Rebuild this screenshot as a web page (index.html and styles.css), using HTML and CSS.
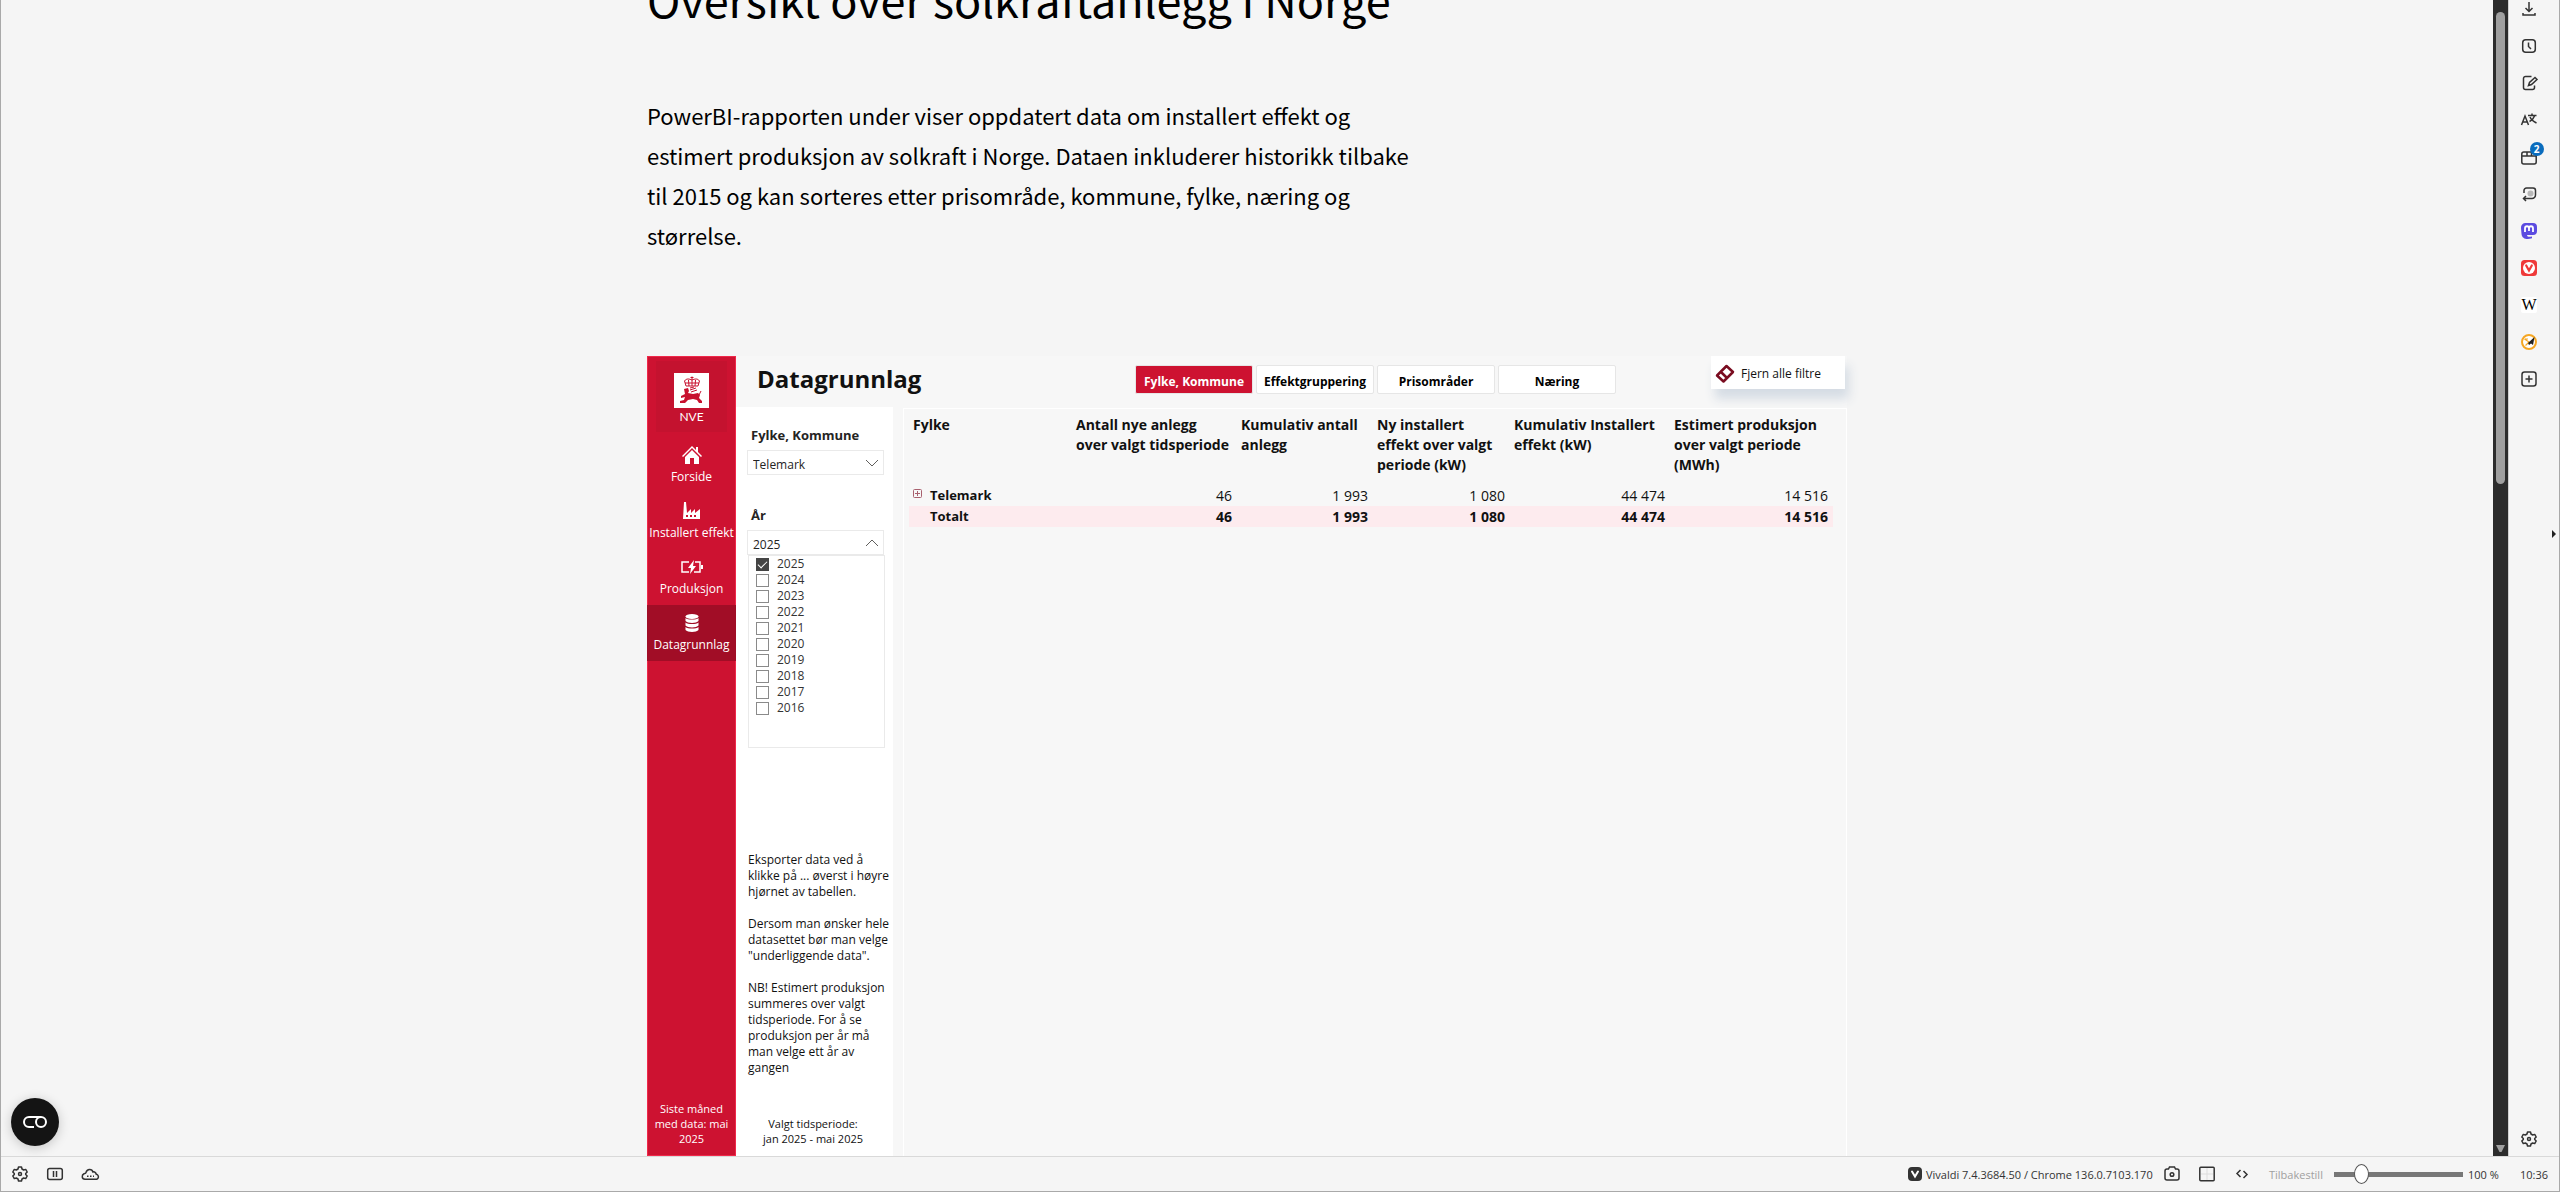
FILE: index.html
```html
<!DOCTYPE html>
<html lang="no">
<head>
<meta charset="utf-8">
<title>Oversikt over solkraftanlegg i Norge</title>
<link rel="stylesheet" href="styles.css">
</head>
<body>
<div class="window">
  <div class="workspace">
    <main class="page">
      <article class="content">
        <h1 class="title">Oversikt over solkraftanlegg i Norge</h1>
        <p class="lead">PowerBI-rapporten under viser oppdatert data om installert effekt og estimert produksjon av solkraft i Norge. Dataen inkluderer historikk tilbake til 2015 og kan sorteres etter prisområde, kommune, fylke, næring og størrelse.</p>
        <section class="report">
          <nav class="rail">
            <div class="logo">
              <svg width="35" height="35" viewBox="0 0 35 35"><path fill="#fff" d="M0 0h35v35H0z"/><g fill="none" stroke="#c8102e" stroke-width="1"><path d="M12 13l-1.500-5c2-3 5-2 7.500-1 2.500-1 5.500-2 7.500 1L24 13zM18 3.500V13M14.500 7l.5 6M21.500 7l-.5 6M16.500 4.500h3M11 10h14"/></g><path fill="#c8102e" d="M10 16l4-1 1 3-1 2 5 1 5-1 2 2-1 3 3 3v2h-3l-2-3-4-1-5 1-3 3H6v-2l4-1 1-3-4 1v-2l4-2z"/><path stroke="#c8102e" fill="none" d="M16 17l6-2M17 19l6-2M25 22l2-4M16 15l4-1"/></svg>
              <span>NVE</span>
            </div>
            <a class="rail-item" href="#"><svg width="20" height="20" viewBox="0 0 20 20" fill="#fff"><path d="M10 1L0 11l1 1 9-9 9 9 1-1-4-4V2h-2v3z"/><path d="M3 12l7-7 7 7v7h-5v-6H8v6H3z"/></svg>Forside</a>
            <a class="rail-item" href="#"><svg width="20" height="20" viewBox="0 0 20 20" fill="#fff"><path fill-rule="evenodd" d="M2 1h2l1 11 4-4v4l4-4v4l5-4v10H1zM4 14v2h2v-2zm4 0v2h2v-2zm4 0v2h2v-2z"/></svg>Installert effekt</a>
            <a class="rail-item" href="#"><svg width="22" height="20" viewBox="0 0 22 20"><path fill="none" stroke="#fff" stroke-width="1.500" d="M8 5H1v10h7M14 5h5v10h-6"/><path fill="#fff" d="M13 3l-6 8h3l-1 6 6-8h-3zM20 8h2v4h-2z"/></svg>Produksjon</a>
            <a class="rail-item rail-item-active" href="#"><svg width="20" height="20" viewBox="0 0 20 20" fill="#fff"><ellipse cx="10" cy="3.500" rx="6.500" ry="2.500"/><path d="M3.500 5c2 2 11 2 13 0v3c-2 2.500-11 2.500-13 0zM3.500 9.500c2 2 11 2 13 0v3c-2 2.500-11 2.500-13 0zM3.500 14c2 2 11 2 13 0v3c-2 2.500-11 2.500-13 0z"/></svg>Datagrunnlag</a>
            <p class="rail-note">Siste måned<br>med data: mai<br>2025</p>
          </nav>
          <div class="report-main">
            <header class="report-head">
              <h2 class="report-title">Datagrunnlag</h2>
              <div class="tabs">
                <button class="tab tab-active" type="button">Fylke, Kommune</button>
                <button class="tab" type="button">Effektgruppering</button>
                <button class="tab" type="button">Prisområder</button>
                <button class="tab" type="button">Næring</button>
              </div>
              <button class="clear" type="button"><svg width="20" height="20" viewBox="0 0 20 20" fill="none" stroke="#7a0c20" stroke-width="2.500" stroke-linejoin="round"><path d="M2 11.500L11.500 2 18 8 8.500 17.500zM6 8l6 6"/></svg>Fjern alle filtre</button>
            </header>
            <div class="report-body">
              <aside class="filters">
                <label class="filter-label" for="fylke">Fylke, Kommune</label>
                <div class="picker">
                  <select id="fylke" class="picker-select"><option>Telemark</option></select>
                  <svg class="picker-arrow" width="14" height="8" viewBox="0 0 14 8"><path d="M1 1l6 6 6-6"/></svg>
                </div>
                <label class="filter-label" for="aar">År</label>
                <div class="picker">
                  <select id="aar" class="picker-select"><option>2025</option></select>
                  <svg class="picker-arrow" width="14" height="8" viewBox="0 0 14 8"><path d="M1 7l6-6 6 6"/></svg>
                </div>
                <div class="years">
                  <label class="year"><input type="checkbox" checked>2025</label>
                  <label class="year"><input type="checkbox">2024</label>
                  <label class="year"><input type="checkbox">2023</label>
                  <label class="year"><input type="checkbox">2022</label>
                  <label class="year"><input type="checkbox">2021</label>
                  <label class="year"><input type="checkbox">2020</label>
                  <label class="year"><input type="checkbox">2019</label>
                  <label class="year"><input type="checkbox">2018</label>
                  <label class="year"><input type="checkbox">2017</label>
                  <label class="year"><input type="checkbox">2016</label>
                </div>
                <div class="help">
                  <p>Eksporter data ved å<br>klikke på ... øverst i høyre<br>hjørnet av tabellen.</p>
                  <p>Dersom man ønsker hele<br>datasettet bør man velge<br>"underliggende data".</p>
                  <p>NB! Estimert produksjon<br>summeres over valgt<br>tidsperiode. For å se<br>produksjon per år må<br>man velge ett år av<br>gangen</p>
                </div>
                <p class="period">Valgt tidsperiode:<br>jan 2025 - mai 2025</p>
              </aside>
              <div class="matrix">
                <table class="data">
                  <colgroup><col class="c-name"><col class="c-new"><col class="c-count"><col class="c-power"><col class="c-total"><col class="c-prod"></colgroup>
                  <thead>
                    <tr><th>Fylke</th><th>Antall nye anlegg<br>over valgt tidsperiode</th><th>Kumulativ antall<br>anlegg</th><th>Ny installert<br>effekt over valgt<br>periode (kW)</th><th>Kumulativ Installert<br>effekt (kW)</th><th>Estimert produksjon<br>over valgt periode<br>(MWh)</th></tr>
                  </thead>
                  <tbody>
                    <tr><th><span class="row-name"><button class="expand" type="button" aria-label="Utvid"><svg width="9" height="9" viewBox="0 0 9 9" fill="none" stroke="#a8606e"><rect x=".5" y=".5" width="8" height="8" rx="1"/><path d="M2 4.500h5M4.500 2v5"/></svg></button>Telemark</span></th><td>46</td><td>1 993</td><td>1 080</td><td>44 474</td><td>14 516</td></tr>
                    <tr class="total"><th><span class="row-name">Totalt</span></th><td>46</td><td>1 993</td><td>1 080</td><td>44 474</td><td>14 516</td></tr>
                  </tbody>
                </table>
              </div>
            </div>
          </div>
        </section>
      </article>
      <button class="consent" type="button" aria-label="Informasjonskapsler"><svg width="24" height="12" viewBox="0 0 24 12" fill="none" stroke="#fff" stroke-width="2"><path d="M11 11H6A5 5 0 0 1 6 1h12"/><circle cx="18" cy="6" r="5"/></svg></button>
    </main>
    <div class="scrollbar"><div class="thumb"></div><svg width="9" height="8" viewBox="0 0 9 8"><path fill="#9f9f9f" d="M0 1h9L5.500 8h-2z"/></svg></div>
    <aside class="panel">
      <button class="tool" type="button" aria-label="Nedlastinger"><svg class="ico" viewBox="0 0 16 16"><path d="M8 1v9M4.500 7L8 10.500 11.500 7M2 12v2h12v-2"/></svg></button>
      <button class="tool" type="button" aria-label="Historikk"><svg class="ico" viewBox="0 0 16 16"><rect x="1.700" y="1.700" width="12.600" height="12.600" rx="3"/><path d="M7.500 4.500v4l2.500 2.500"/></svg></button>
      <button class="tool" type="button" aria-label="Notater"><svg class="ico" viewBox="0 0 16 16"><path d="M10.500 1.500H4.500a2 2 0 0 0-2 2v9a2 2 0 0 0 2 2h7a2 2 0 0 0 2-2V10.500M7.500 10.500l1-3 5.500-5L16 4.500 10.500 9.500z"/></svg></button>
      <button class="tool" type="button" aria-label="Oversett"><svg class="ico" viewBox="0 0 16 16"><path d="M.5 13L4 4l3.500 9M1.500 10h5M7 3.500h8.500M11 1.500v2M13.500 4c-1 3-3 4.500-5 5.500M9 5c1 2.500 3.500 4.500 6.500 6"/></svg></button>
      <button class="tool" type="button" aria-label="Faner"><svg class="ico" viewBox="0 0 16 16"><rect x=".8" y="3" width="14.400" height="12" rx="2"/><path d="M1 7h14M6 3v4M10.500 3v4"/></svg><span class="badge">2</span></button>
      <button class="tool" type="button" aria-label="Økter"><svg class="ico" viewBox="0 0 16 16"><path d="M3 7V4.500a2.500 2.500 0 0 1 2.500-2.500h6.500a2.500 2.500 0 0 1 2.500 2.500V9A3.500 3.500 0 0 1 11 12.500H2.500M5 10l-2.500 2.500L5 15"/><circle cx="9.500" cy="7.500" r="3" fill="#b8b8b8" stroke="none"/></svg></button>
      <button class="tool" type="button" aria-label="Mastodon"><svg class="ico" viewBox="0 0 16 16" stroke="none"><path fill="#5b4be0" d="M4 0h8a4 4 0 0 1 4 4v4a4 4 0 0 1-4 4H6c0 2 2.500 2 5 1.500v1.800C6 17 1 16 .5 11L0 5a5 5 0 0 1 4-5z"/><path fill="none" stroke="#fff" stroke-width="1.800" d="M4 9V5.500C4 2.500 8 2.500 8 5.500V8M8 5.500c0-3 4-3 4 0V9"/></svg></button>
      <button class="tool" type="button" aria-label="Vivaldi"><svg class="ico" viewBox="0 0 16 16" stroke="none"><rect width="16" height="16" rx="3.500" fill="#ef3939"/><circle cx="8" cy="8" r="6" fill="#fff"/><path fill="none" stroke="#ef3939" stroke-width="2.200" stroke-linecap="round" d="M5.200 5.500L8 10.500l2.800-5"/></svg></button>
      <button class="tool" type="button" aria-label="Wikipedia"><span class="wiki">W</span></button>
      <button class="tool" type="button" aria-label="Nettpanel"><svg class="ico" viewBox="0 0 16 16"><circle cx="8" cy="8" r="7" fill="#fff" stroke="#f5a623" stroke-width="2"/><path stroke-width="1.200" d="M3.500 5l4.500 3-3.500 3.500M4 5h3" stroke="#f5a623"/><path fill="#222" stroke="none" d="M13.500 3l-1.500 8-2-1.500-2 1.500-1-2z"/></svg></button>
      <button class="tool" type="button" aria-label="Legg til"><svg class="ico" viewBox="0 0 16 16"><rect x="1" y="1" width="14" height="14" rx="2.500"/><path d="M8 4.500v7M4.500 8h7"/></svg></button>
      <button class="tool tool-end" type="button" aria-label="Innstillinger"><svg class="ico" viewBox="0 0 16 16"><path stroke-linejoin="round" d="M6.500 1h3l.5 2 1.700 1 2-.6 1.500 2.600L13.700 7.500v1l1.500 1.500-1.500 2.600-2-.6L10 13l-.5 2h-3L6 13l-1.700-1-2 .6L.8 10l1.500-1.500v-1L.8 6l1.500-2.600 2 .6L6 3z"/><circle cx="8" cy="8" r="1.500"/></svg></button>
      <button class="toggle" type="button" aria-label="Vis panel"></button>
    </aside>
  </div>
  <footer class="status">
    <button class="stool" type="button" aria-label="Innstillinger"><svg class="ico" viewBox="0 0 16 16"><path stroke-linejoin="round" d="M6.500 1h3l.5 2 1.700 1 2-.6 1.500 2.600L13.700 7.500v1l1.500 1.500-1.500 2.600-2-.6L10 13l-.5 2h-3L6 13l-1.700-1-2 .6L.8 10l1.500-1.500v-1L.8 6l1.500-2.600 2 .6L6 3z"/><circle cx="8" cy="8" r="1.500"/></svg></button>
    <button class="stool" type="button" aria-label="Pause"><svg class="ico" viewBox="0 0 16 16"><rect x=".7" y="2.500" width="14.600" height="11" rx="2"/><path d="M6.500 5v6M9.500 5v6"/></svg></button>
    <button class="stool" type="button" aria-label="Synkronisering"><svg class="ico" viewBox="0 0 16 16"><path d="M3 13.300h10.500a2.500 2.500 0 0 0 .8-5C14 6.500 12.500 5.500 11 6 10 2.500 5 2.500 4 6.500c0 .5-1 1-2 1.300C-.5 9-.5 13 3 13.300z"/><path stroke-dasharray="1.500 1.500" d="M5 10.300h7"/></svg></button>
    <span class="version"><svg class="version-logo" width="14" height="16" viewBox="0 0 14 16"><rect y="1" width="14" height="14" rx="4" fill="#333"/><path fill="none" stroke="#fff" stroke-width="2" stroke-linecap="round" d="M4 5.500l3 5 3-5"/></svg><span>Vivaldi 7.4.3684.50 / Chrome 136.0.7103.170</span></span>
    <button class="stool" type="button" aria-label="Skjermbilde"><svg class="ico" viewBox="0 0 16 16"><path d="M1 5a2 2 0 0 1 2-2h1.500l1-2h5l1 2H13a2 2 0 0 1 2 2v7a2 2 0 0 1-2 2H3a2 2 0 0 1-2-2z"/><circle cx="8" cy="8.500" r="1.800"/></svg></button>
    <button class="stool" type="button" aria-label="Fliser"><svg class="ico" viewBox="0 0 16 16"><rect x=".8" y="1.300" width="14.400" height="13.400" rx="1"/><path stroke="#ddd" stroke-width="1" d="M8 2v12M2 8h12"/></svg></button>
    <button class="stool" type="button" aria-label="Sidehandlinger"><svg class="ico" viewBox="0 0 16 16"><path d="M6.500 4L3 7.500 6.500 11M9.500 5l3.500 3.500L9.500 12"/></svg></button>
    <button class="reset" type="button" disabled>Tilbakestill</button>
    <input class="zoom" type="range" min="20" max="500" value="103" aria-label="Sidezoom">
    <span class="percent">100 %</span>
    <span class="clock">10:36</span>
  </footer>
</div>
</body>
</html>
```

FILE: styles.css
```css
* { box-sizing: border-box; }
body { margin: 0; font-family: "Open Sans", "Noto Sans", sans-serif; font-size: 12px; color: #111; }
h1, h2, p { margin: 0; }
button, select, input { font: inherit; color: inherit; margin: 0; }
button { border: 0; padding: 0; background: none; }

.window { height: 100vh; display: flex; flex-direction: column; background: #f5f5f5; border: 1px solid #a9a9a9; border-top: 0; }
.workspace { flex: 1; min-height: 0; display: flex; }
.page { flex: 1; min-width: 0; overflow: hidden; display: flex; flex-direction: column; }
.content { flex: 1; width: 100%; max-width: 1200px; margin: -35px auto 0; display: flex; flex-direction: column; font-family: "Noto Sans CJK SC", sans-serif; color: #000; }
.title { font-size: 45px; line-height: 68px; font-weight: 400; }
.lead { max-width: 780px; margin: 62px 0 101px; font-size: 22px; line-height: 40px; }

.report { flex: 1; display: flex; background: #f7f7f7; font-family: "Open Sans", "Noto Sans", sans-serif; font-size: 12px; color: #111; }
.rail { width: 89px; flex: none; display: flex; flex-direction: column; background: #cd1231; border: 1px solid #f0284a; color: #fff; }
.logo { width: 71px; height: 71px; margin: 4px auto 5px; padding-top: 12px; display: flex; flex-direction: column; align-items: center; background: #c4122f; font-family: Lato, sans-serif; font-size: 12px; line-height: 17px; }
.rail-item { height: 56px; margin: 0 -1px; padding-top: 8px; display: flex; flex-direction: column; align-items: center; gap: 4px; color: #fff; text-decoration: none; line-height: 16px; white-space: nowrap; }
.rail-item-active { background: #a10d26; }
.rail-note { margin-top: auto; padding-bottom: 9px; text-align: center; font-size: 11px; line-height: 15px; }

.report-main { flex: 1; min-width: 0; display: flex; flex-direction: column; }
.report-head { height: 51px; display: flex; align-items: flex-start; }
.report-title { flex: 1; padding-left: 21px; font-size: 24px; line-height: 46px; font-weight: 700; }
.tabs { display: flex; gap: 3px; margin-top: 9px; }
.tab { width: 118px; height: 29px; padding-top: 3px; background: #fff; border: 1px solid #e6e6e6; border-radius: 2px; font-size: 12px; font-weight: 700; white-space: nowrap; color: #000; }
.tab-active { background: #cd1231; color: #fff; }
.clear { width: 134px; height: 33px; margin: 0 2px 0 95px; padding: 2px 0 0 4px; display: flex; align-items: center; gap: 6px; background: #fff; box-shadow: 4px 10px 10px #d5dce4; white-space: nowrap; }

.report-body { flex: 1; display: flex; gap: 10px; }
.filters { width: 157px; flex: none; padding: 18px 8px 10px 11px; display: flex; flex-direction: column; background: #fff; }
.filter-label { padding-left: 4px; font-size: 13px; line-height: 20px; font-weight: 700; color: #252423; }
.picker { position: relative; margin: 5px 0 30px; }
.picker + .years { margin-top: -30px; }
.picker-select { width: 137px; height: 25px; padding: 5px 0 0 5px; display: block; appearance: none; background: #fff; border: 1px solid #eaeaea; border-radius: 0; font-size: 12px; line-height: 16px; color: #252423; }
.picker-arrow { position: absolute; right: 6px; top: 9px; fill: none; stroke: #605e5c; }
.years { width: 137px; height: 193px; margin-left: 1px; padding: 0 0 0 7px; border: 1px solid #eaeaea; }
.year { height: 16px; display: flex; align-items: center; gap: 8px; font-size: 12px; line-height: 16px; color: #333; }
.year input { width: 13px; height: 13px; appearance: none; background: #fff; border: 1px solid #8a8a8a; display: grid; place-items: center; }
.year input:checked { background: #444; border-color: #444; }
.year input:checked::before { content: ""; width: 8px; height: 4px; border: solid #fff; border-width: 0 0 1px 1px; rotate: -45deg; translate: 0 -1px; }
.help { margin: 104px -8px 0 1px; display: flex; flex-direction: column; gap: 16px; line-height: 16px; white-space: nowrap; font-size: 12px; }
.period { margin-top: auto; padding-right: 6px; text-align: center; font-size: 11px; line-height: 15px; white-space: nowrap; }

.matrix { flex: 1; min-width: 0; margin-top: 1px; padding: 6px 13px 0 5px; border: 1px solid #fff; border-bottom: 0; }
.data { width: 100%; table-layout: fixed; border-collapse: collapse; font-size: 14px; }
.c-name { width: 163px; }
.c-new { width: 165px; }
.c-count { width: 136px; }
.c-power { width: 137px; }
.c-total { width: 160px; }
.data th { padding: 0 4px; text-align: left; vertical-align: top; font-weight: 700; line-height: 20px; white-space: nowrap; }
.data thead th { height: 70px; }
.data tbody th { font-size: 13px; }
.data td { padding: 0 5px; text-align: right; line-height: 20px; }
.data tbody tr { height: 21px; }
.total { background: #fdebee; }
.total td { font-weight: 700; }
.row-name { display: block; position: relative; padding-left: 17px; }
.expand { position: absolute; left: 0; top: 4px; line-height: 0; }

.consent { position: fixed; left: 11px; bottom: 46px; width: 48px; height: 48px; border-radius: 50%; background: #141414; display: grid; place-items: center; box-shadow: 0 2px 12px #0003; }

.scrollbar { width: 15px; flex: none; padding: 12px 3px 4px; display: flex; flex-direction: column; justify-content: space-between; background: #2c2c2c; }
.thumb { height: 472px; border-radius: 5px; background: #9f9f9f; }
.panel { position: relative; width: 51px; flex: none; display: flex; flex-direction: column; align-items: center; border-left: 1px solid #d0d0d0; overflow: hidden; color: #333; }
.ico { width: 16px; height: 16px; display: block; fill: none; stroke: #333; stroke-width: 1.500px; overflow: visible; }
.ico[stroke="none"] { stroke: none; }
.tool { position: relative; width: 37px; height: 37px; margin-right: 10px; flex: none; display: grid; place-items: center; }
.tool:first-child { margin-top: -10px; }
.tool-end { margin-top: auto; margin-bottom: -1px; }
.badge { position: absolute; left: 19px; top: 4px; width: 14px; height: 14px; border-radius: 50%; background: #0a6cbd; color: #fff; font-size: 10px; line-height: 14px; font-weight: 700; text-align: center; }
.wiki { width: 16px; height: 16px; background: #fff; border-radius: 2px; font: 16px/16px "Liberation Serif", serif; color: #000; text-align: center; }
.toggle { position: absolute; right: 3px; top: 530px; border: solid transparent; border-width: 4px 0 4px 4px; border-left-color: #222; }

.status { height: 35px; flex: none; padding: 0 10px 0 1px; display: flex; align-items: center; border-top: 1px solid #d9d9d9; color: #333; font-size: 11px; }
.stool { width: 35px; height: 30px; flex: none; display: grid; place-items: center; }
.version { width: 246px; margin-left: auto; display: flex; align-items: center; gap: 4px; white-space: nowrap; }
.version-logo { flex: none; }
.reset { width: 53px; margin-left: 10px; color: #a0a0a0; white-space: nowrap; text-align: left; }
.zoom { width: 129px; height: 20px; margin: 0 5px 0 12px; appearance: none; background: linear-gradient(#777, #777) center / 100% 5px no-repeat; border-radius: 3px; }
.zoom::-webkit-slider-thumb { appearance: none; width: 15px; height: 20px; border: 1px solid #555; border-radius: 50%; background: #fff; }
.percent { width: 52px; }
.clock { width: 29px; white-space: nowrap; }
```
